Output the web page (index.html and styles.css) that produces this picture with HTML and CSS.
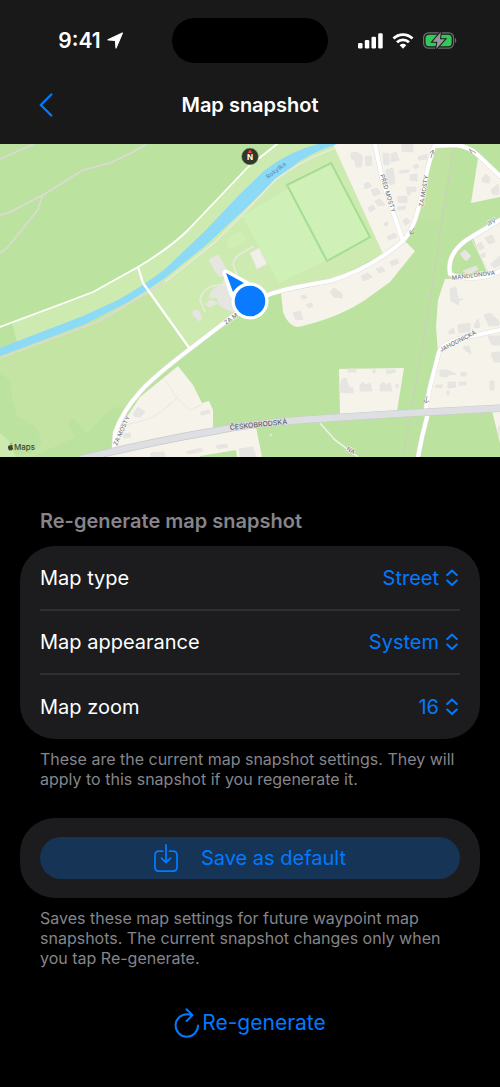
FILE: index.html
```
<!DOCTYPE html>
<html lang="en">
<head>
  <meta charset="UTF-8" />
  <meta name="viewport" content="width=device-width, initial-scale=1" />
  <title>Map snapshot</title>
  <link rel="stylesheet" href="styles.css">
</head>
<body>
  <header class="top">
    <div class="status-bar">
      <div class="status-left">
        <span>9:41</span>
        <svg width="17" height="17" viewBox="0 0 17 17" aria-hidden="true"><path d="M15.400 1 1 7.800 8.500 8.500 9 16z" fill="#fff" stroke="#fff" stroke-width="1.200" stroke-linejoin="round"/></svg>
      </div>
      <div class="island"></div>
      <div class="status-right">
        <svg width="25" height="16" viewBox="0 0 25 16" fill="#fff" aria-hidden="true">
          <rect x="0" y="10" width="4.500" height="5.500" rx="1.300"/><rect x="6.800" y="7" width="4.500" height="8.500" rx="1.300"/><rect x="13.500" y="3.700" width="4.500" height="11.800" rx="1.300"/><rect x="20.200" y="0.300" width="4.500" height="15.200" rx="1.300"/>
        </svg>
        <svg width="22" height="16" viewBox="0 0 22 16" fill="none" stroke="#fff" stroke-width="2.800" aria-hidden="true">
          <path d="M1.500 5.500a13.500 13.500 0 0 1 19 0"/><path d="M5 9.300a8.500 8.500 0 0 1 12 0"/><path d="M7.700 12.200a4.700 4.700 0 0 1 6.600 0L11 15.700z" fill="#fff" stroke="none"/>
        </svg>
        <svg width="34" height="17" viewBox="0 0 34 17" aria-hidden="true">
          <rect x=".6" y=".8" width="30" height="15.400" rx="5" fill="none" stroke="#6b6c6e" stroke-width="1.200"/>
          <rect x="2.500" y="2.700" width="26.200" height="11.600" rx="3.500" fill="#34c759"/>
          <path d="M32 6v5c1.700-.7 1.700-4.300 0-5z" fill="#6b6c6e"/>
          <path class="bolt" d="M17.800 0 9.500 9.800H14.300L13.200 17 22 7.200H17z"/>
        </svg>
      </div>
    </div>
    <nav class="nav-bar">
      <button class="back" type="button" aria-label="Back">
        <svg width="14" height="24" viewBox="0 0 14 24" fill="none" stroke="#007aff" stroke-width="2.400" stroke-linecap="round" stroke-linejoin="round"><path d="M12.300 1.500 1.800 12l10.500 10.500"/></svg>
      </button>
      <h1 class="title">Map snapshot</h1>
    </nav>
  </header>

  <main>
    <svg class="map" viewBox="0 144 500 313" role="img" aria-label="Street map">
      <!-- land -->
      <rect y="144" width="500" height="313" fill="#bce2a0"/>
      <path d="M12 323 72 300 93 292 138 267 170 244 188 230 248 167 277 144H334L383 254 330 281 270 295 237 313 190 349 150 300 123 302 17 342z" fill="#cdebb0"/>
      <path d="M0 355 83 325 128 301 150 293 190 349 150 386 125 408Q116 405 108 411L87 433 73 418 68 425 75 437 50 449 30 457H0v-2l30-1 12-11-5-15-20-13-5-15-2-20-10-7z" fill="#c4e4a4"/>
      <path d="M0 433 10 442 15 457H0z" fill="#cdebb0"/>
      <path d="M434 146h20l-14 74-24-1q11-30 18-73z" fill="#c4e4a4" opacity=".5"/>
      <path d="M242 216 331 163 370 237 325 261 279 283z" fill="#cff0b7"/>
      <path d="M287 185 331 163 370 237 327 261z" fill="#cff0b7" stroke="#a5dd91" stroke-width="2"/>
      <path d="M229 239q5-8 13-6l4 6-9 8-9 1q-3-4 1-9z" fill="#cff0b7" opacity=".8"/>

      <!-- built-up areas -->
      <g fill="#f6f3ea">
        <path d="M333 144H434L428 167 418 210 403 241 383 254z"/>
        <path d="M281 293 330 283 363 270 406 242 415 251 390 282 365 300Q338 318 298 327 288 326 283 312z"/>
        <path d="M478 158 500 177V197L471 203z"/>
        <path d="M473 238 500 220V272L488 275z"/>
        <path d="M445 279 490 277 500 272V409L426 411 438 352 436 327 438 300z"/>
        <path d="M339 369 404 368 397 411 340 414z"/>
        <path d="M178 366 193 385 202 403 209 401 213 410V430L114 452 117 432 140 397z"/>
        <path d="M213 434 256 427 262 457H237L236 450 200 456V457H100z"/>
        <path d="M492 411H500V443z"/>
      </g>

      <!-- buildings -->
      <g fill="#e7e5e2" stroke="#e7e5e2" stroke-width="1" stroke-linejoin="round">
        <path d="m209 260 9-5 7 12 2 7-7 3-4-5z"/>
        <path d="m250 253 9-5 8 16-10 5z" fill="#f2efe8"/>
        <path d="m225 279 11-4 9 28-12 9-13-6-3-9-8 1 3-8 9-5z"/>
        <path d="m193 311 5-1 4 8-3 3-6-6zM205 304l6-4 7 3-8 4z"/>
        <path d="M351 153l6-1 5 4v7l-1 4h-5l-1-6-4-3zM365 157l6-1 1 9-6 1zM383 153l6 1v10l-5 1zM391 154l5-2 3 8-8 2zM402 144h11v8l-11-1zM418 157l9-3v5l-8 1zM386 170l7-2 2 15-4 2-5-4zM399 171l10-1v2l-9 1zM413 166l4-2 2 3-4 2zM410 175l7-1v7l-7-1zM407 187h9v4l-6 1v4l-3-3zM398 197l9-1v7l-9-1zM398 207l8-1-1 3-7 1zM364 184l4-2 4 4-7 3zM371 190l6-2 4 5-7 3zM375 201l5-2 5 6-7 1zM368 208l5-3 2 4-5 3zM403 220l4-2 3 4-5 3zM384 223l4-1v3l-3 1zM387 237l8-4 2 4-8 3z"/>
        <path d="M390 262l7-3 2 4-7 3zM376 269l6-2 3 4-6 2zM361 276l7-3 4 4-8 4zM330 292l4-4 8 6v4l-8-1zM301 296l4-1 2 3-5 1zM293 313l7-2 3 8-7 1zM306 305l5-2 2 3-4 2z"/>
        <path d="M482 179l4-5 4 4-1 5-6-1zM491 190l7-6 1 10-6 1zM460 254l5-4 6 6-5 5zM463 271l13-5 2 3-9 5zM485 238l7-3 3 7-6 2zM477 245l4-3 3 6-4 2zM481 254l4-1v4h-4zM491 264l9-8v9l-6 3z"/>
        <path d="M450 289l6-2 3 18-8-4zM453 299h10l-5 2zM449 331l4-3 2 5-6 1zM458 325l12-2v8l-11 2zM474 325l4-6 2 8-5 1zM484 315l6-2 9 8v4l-10 1zM488 336h12v9h-8zM463 347l6-1 2 8-5-3zM491 353l9-1v10h-6zM440 370h7l9 4-8 1-1 2-7-1zM461 372l5 1v3h-5zM436 385h7l-2 3-6-1zM448 382h7l1 5-8 1zM459 382h7v3h-7zM447 391h2v4h-2zM490 381h4v9h-4zM499 426v10l-1-7z"/>
        <path d="M342 379l4-1 3 10h4v5l-13-1v-5zM348 369h8v3h-8zM373 369h2v4h-2zM386 370h10l-1 2-8 2zM360 385l3-3 3 3 4-2 2 8h-12zM380 385l4-3 2 3 4-2 2 8h-12zM396 384h2v4h-2z"/>
        <path d="M134 413l4-6 7 5-5 5-6-1zM123 434l7-1 1 4-7 1zM201 412l8-2 1 3-9 2zM186 452l15-4 2 3-14 3zM216 446l10-2 2 3-10 2zM239 449l14-2 3 10h-16zM151 453l13-1 1 5h-14z"/>
        <circle cx="271" cy="435" r="1"/>
      </g>

      <!-- river -->
      <path d="M0 348 83 316 118 300Q143 286 165 269L205 231 240 194 265 170Q290 151 318 144H337Q316 151 300 161L273 182 245 209 205 246 165 278Q147 291 128 302L83 325 0 356z" fill="#8cdaf5"/>

      <!-- paths -->
      <g fill="none" stroke="#dcdad6" stroke-width="1.600" stroke-linejoin="round">
        <path d="M0 159 34 144M0 215 8 213 43 195 83 170 110 163 133 152 146 144M43 195 37 211 7 248 0 253"/>
        <path d="M0 358 97 322 133 301 165 282"/>
        <path d="M165 282 215 242 245 212 275 180Q300 161 335 148" stroke="#e9eadf"/>
        <path d="M254 246 240 254Q231 261 234 267L237 275M225 285Q203 284 200 300L205 312" stroke="#e9eadf"/>
        <path d="M454 144 430 300 403 457" stroke="#c9cfc0" stroke-width="1"/>
        <path d="M320 423 335 440 358 457" stroke="#eef1e5"/>
        <path d="M165 380 177 398 190 410 203 404M177 398 165 408M125 425Q155 420 170 405M472 240 489 273" stroke="#e9e8e5" stroke-width="1"/>
      </g>

      <!-- roads -->
      <g fill="none" stroke="#e0dfda" stroke-width="5" stroke-linejoin="round" stroke-linecap="round">
        <path d="M114 450 115 433Q122 412 140 392 152 378 190 349L237 313 268 295Q282 289 330 281 370 269 403 241 413 230 418 210L428 167 434 146 455 145Q470 146 481 158L500 176"/>
        <path d="M375 144 383 183 403 241M500 220 473 236Q446 251 450 274 465 281 490 276L500 271"/>
        <path d="M500 330 467 337Q443 342 439 352L430 387 426 407 427 417 422 437 418 457"/>
      </g>
      <g fill="none" stroke="#fff" stroke-width="4" stroke-linejoin="round" stroke-linecap="round">
        <path d="M0 327 72 300 93 292 138 267Q170 248 188 230L248 167 277 144" stroke-width="1.800"/>
        <path d="M138 267 143 283 155 300 190 349" stroke-width="2.300"/>
        <path d="M114 450 115 433Q122 412 140 392 152 378 190 349L237 313 268 295Q282 289 330 281 370 269 403 241 413 230 418 210L428 167 434 146 455 145Q470 146 481 158L500 176"/>
        <path d="M375 144 383 183 403 241M500 220 473 236Q446 251 450 274 465 281 490 276L500 271"/>
        <path d="M500 330 467 337Q443 342 439 352L430 387 426 407 427 417 422 437 418 457"/>
      </g>
      <path d="M80 459Q170 438 215 431 250 423 330 418L410 413 505 408" fill="none" stroke="#c9cacc" stroke-width="7.500"/>
      <path d="M80 459Q170 438 215 431 250 423 330 418L410 413 505 408" fill="none" stroke="#dedfe3" stroke-width="6.300"/>

      <!-- street names -->
      <g class="street">
        <text transform="translate(230 430) rotate(-6)" class="street-main">ČESKOBRODSKÁ</text>
        <text transform="translate(380 175) rotate(73)">PŘED MOSTY</text>
        <text transform="translate(423 207) rotate(-80)">ZA MOSTY</text>
        <text transform="translate(117 446) rotate(-66)">ZA MOSTY</text>
        <text transform="translate(226 325) rotate(-37)">ZA MOSTY</text>
        <text transform="translate(452 280) rotate(-7)">MANDLONOVA</text>
        <text transform="translate(441 352) rotate(-27)">JAHODNICKÁ</text>
        <text transform="translate(346 450) rotate(30)">NA</text>
        <text transform="translate(488 226) rotate(-28)">JIV</text>
        <text transform="translate(268 179) rotate(-37)" class="river-name">Rokytka</text>
      </g>
      <g fill="none" stroke="#8f8f92" stroke-width=".8">
        <path d="M431 158 433 150M430 153l3-3 1 4M469 149l7 4M469 149l3 4M410 234l4-6M410 230v4l4-1M426 403l1-7M424 400l2 3 3-2"/>
      </g>

      <!-- compass -->
      <circle cx="250" cy="156.500" r="8.500" fill="#30382c" stroke="#a9bd94" stroke-width=".6"/>
      <path d="m250 149.500 2.300 3.500h-4.600z" fill="#ff3b30"/>
      <text class="compass" x="250" y="160">N</text>

      <!-- heading and location -->
      <path d="M226 273 246 284 233 294z" fill="#fff" stroke="#fff" stroke-width="7" stroke-linejoin="round"/>
      <circle cx="250" cy="301" r="18.500" fill="#fff"/>
      <path d="M226 273 244 283Q237 286 233 292z" fill="#0a7aff"/>
      <circle cx="250" cy="301" r="15.300" fill="#0a7aff"/>

      <path d="M10.500 445.300q1.200-.8 2.500.2-1.400 1.300.2 2.900-1 2.300-1.900 2.100-.8-.4-1.500 0c-1.100.2-2.700-3.300-1.200-4.700q.8-.8 1.900-.5zm-.2-.6q0-1.500 1.300-1.900.1 1.500-1.300 1.900z" fill="#3b4933"/>
      <text class="maps-mark" x="14" y="450">Maps</text>
    </svg>

    <form class="settings">
      <section class="group">
        <h2 class="heading">Re-generate map snapshot</h2>
        <div class="card card-rows">
          <div class="row">
            <label for="mapType">Map type</label>
            <span class="picker">
              <select id="mapType"><option>Street</option></select>
              <svg class="chevrons" width="12" height="18" viewBox="0 0 12 18" aria-hidden="true"><path d="M1.200 6 6 1.500 10.800 6M1.200 11.500 6 16 10.800 11.500"/></svg>
            </span>
          </div>
          <div class="row">
            <label for="mapAppearance">Map appearance</label>
            <span class="picker">
              <select id="mapAppearance"><option>System</option></select>
              <svg class="chevrons" width="12" height="18" viewBox="0 0 12 18" aria-hidden="true"><path d="M1.200 6 6 1.500 10.800 6M1.200 11.500 6 16 10.800 11.500"/></svg>
            </span>
          </div>
          <div class="row">
            <label for="mapZoom">Map zoom</label>
            <span class="picker">
              <select id="mapZoom"><option>16</option></select>
              <svg class="chevrons" width="12" height="18" viewBox="0 0 12 18" aria-hidden="true"><path d="M1.200 6 6 1.500 10.800 6M1.200 11.500 6 16 10.800 11.500"/></svg>
            </span>
          </div>
        </div>
        <p class="note">These are the current map snapshot settings. They will apply to this snapshot if you regenerate it.</p>
      </section>

      <section class="group">
        <div class="card card-button">
          <button class="save" type="button">
            <svg width="24" height="28" viewBox="0 0 24 28" fill="none" stroke="#007aff" stroke-width="1.800" stroke-linecap="round" stroke-linejoin="round" aria-hidden="true"><path d="M8.500 7.200H5.200Q1 7.200 1 11.400V23q0 4.200 4.200 4.200h13.600Q23 27.200 23 23V11.400q0-4.200-4.200-4.200h-3.300M12 1v17.500M7.500 14.200l4.500 4.500 4.500-4.500"/></svg>
            Save as default
          </button>
        </div>
        <p class="note">Saves these map settings for future waypoint map snapshots. The current snapshot changes only when you tap Re-generate.</p>
      </section>

      <button class="regenerate" type="button">
        <svg width="26" height="30" viewBox="0 0 26 30" fill="none" stroke="#007aff" stroke-width="2" stroke-linecap="round" stroke-linejoin="round" aria-hidden="true"><path d="M24 17.500A11.200 11.200 0 1 1 12.800 6.300q3 0 5.600.8M12.500 1.200l6 5.900-6 6"/></svg>
        Re-generate
      </button>
    </form>
  </main>
</body>
</html>
```
FILE: styles.css
```
* {
  box-sizing: border-box;
}

body {
  margin: 0;
  background-color: #000;
  color: #fff;
  font-family: Inter, "Liberation Sans", sans-serif;
  font-size: 20px;
  line-height: 28px;
}

button,
select {
  font: inherit;
  color: #007aff;
  background: none;
  border: none;
  padding: 0;
  cursor: pointer;
}

.top {
  background-color: #191919;
  padding-top: 18px;
}

.status-bar {
  display: grid;
  grid-template-columns: 1fr 156px 1fr;
  align-items: center;
}

.status-left,
.status-right {
  display: flex;
  align-items: center;
  justify-content: center;
  gap: 6px;
  font-size: 21px;
  font-weight: 600;
}

.status-left {
  padding-left: 10px;
}

.status-right {
  gap: 9px;
  padding-right: 14px;
}

.bolt {
  fill: #98989c;
  stroke: #191919;
  stroke-width: 2px;
  paint-order: stroke;
}

.island {
  height: 45px;
  border-radius: 23px;
  background-color: #000;
}

.nav-bar {
  display: grid;
  grid-template-columns: 60px 1fr 60px;
  align-items: center;
  padding: 24px 16px 21px;
}

.back {
  display: flex;
  justify-content: center;
  padding: 6px 0;
}

.title {
  margin: 0;
  font-size: 20px;
  font-weight: 600;
  text-align: center;
}

.map {
  display: block;
  width: 100%;
}

.street {
  font-size: 6px;
  font-weight: 500;
  fill: #77777b;
  stroke: #fff;
  stroke-width: 1px;
  paint-order: stroke;
}

.street-main {
  font-size: 7px;
  fill: #5f5f64;
  stroke: #dedfe3;
}

.river-name {
  fill: #5a93bd;
  stroke: none;
}

.compass {
  font-size: 8px;
  font-weight: 700;
  text-anchor: middle;
  fill: #fff;
}

.maps-mark {
  font-size: 8px;
  font-weight: 500;
  fill: #3b4933;
}

.settings {
  padding: 50px 20px 48px;
}

.group {
  margin-bottom: 29px;
}

.heading {
  margin: 0 20px 11px;
  font-size: 20px;
  font-weight: 600;
  color: #85858b;
}

.card {
  border-radius: 35px;
  background-color: #1c1c1e;
}

.card-rows {
  padding: 1px 20px 0;
}

.row {
  display: flex;
  align-items: center;
  justify-content: space-between;
  height: 64px;
  border-bottom: 2px solid #2f2f31;
}

.row:last-child {
  border-bottom: none;
}

.picker {
  display: flex;
  align-items: center;
  gap: 7px;
  padding-right: 2px;
}

.picker select {
  appearance: none;
  text-align-last: right;
}

.chevrons {
  fill: none;
  stroke: #007aff;
  stroke-width: 2px;
  stroke-linecap: round;
  stroke-linejoin: round;
}

.note {
  margin: 10px 20px 0;
  font-size: 16px;
  line-height: 20px;
  color: #85858b;
}

.card-button {
  padding: 19px 20px;
}

.save {
  display: flex;
  align-items: center;
  justify-content: center;
  gap: 23px;
  width: 100%;
  height: 42px;
  border-radius: 21px;
  background-color: #163456;
}

.regenerate {
  display: flex;
  align-items: center;
  justify-content: center;
  gap: 2px;
  margin: 40px auto 0;
  font-size: 21px;
}
```
